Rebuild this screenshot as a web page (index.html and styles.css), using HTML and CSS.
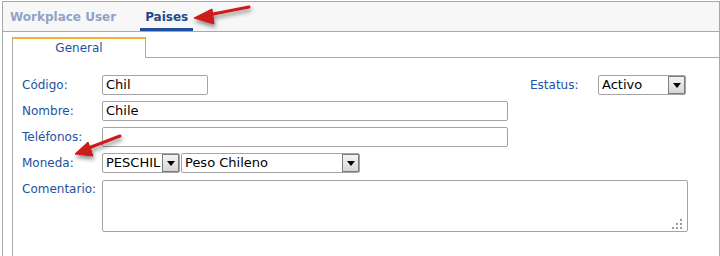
FILE: index.html
```html
<!DOCTYPE html>
<html>
<head>
<meta charset="utf-8">
<link rel="stylesheet" href="styles.css">
</head>
<body>
<div class="window">
  <div class="tabbar">
    <div class="tab">Workplace User</div>
    <div class="tab active">Paises</div>
  </div>
  <div class="content">
    <div class="subtabs">
      <div class="subtab">General</div>
      <div class="subtab-fill"></div>
    </div>
    <div class="panel">
      <div class="form">
        <div class="lbl">Código:</div>
        <div class="ctrl first-row">
          <div class="field w-code">Chil</div>
          <div class="status">
            <div class="lbl status-lbl">Estatus:</div>
            <div class="select w-status"><span class="sel-text">Activo</span><span class="sel-btn"><span class="tri"></span></span></div>
          </div>
        </div>

        <div class="lbl">Nombre:</div>
        <div class="ctrl"><div class="field w-wide">Chile</div></div>

        <div class="lbl">Teléfonos:</div>
        <div class="ctrl"><div class="field w-wide"></div></div>

        <div class="lbl">Moneda:</div>
        <div class="ctrl money">
          <div class="select w-cur"><span class="sel-text">PESCHIL</span><span class="sel-btn"><span class="tri"></span></span></div>
          <div class="select w-curname"><span class="sel-text">Peso Chileno</span><span class="sel-btn"><span class="tri"></span></span></div>
        </div>

        <div class="lbl lbl-top">Comentario:</div>
        <div class="ctrl">
          <div class="textarea">
            <svg class="grip" width="12" height="12" viewBox="0 0 12 12">
              <g fill="#9a9a9a">
                <rect x="8" y="1" width="2" height="2"/>
                <rect x="4" y="5" width="2" height="2"/><rect x="8" y="5" width="2" height="2"/>
                <rect x="0" y="9" width="2" height="2"/><rect x="4" y="9" width="2" height="2"/><rect x="8" y="9" width="2" height="2"/>
              </g>
            </svg>
          </div>
        </div>
      </div>
    </div>
  </div>
</div>

<svg class="annot" width="720" height="256" viewBox="0 0 720 256">
  <defs>
    <filter id="sh" x="-30%" y="-30%" width="160%" height="160%">
      <feDropShadow dx="1" dy="3" stdDeviation="2" flood-color="#000" flood-opacity="0.45"/>
    </filter>
  </defs>
  <g filter="url(#sh)" fill="#cc1a1a" stroke="#cc1a1a">
    <line x1="249" y1="7" x2="208" y2="15" stroke-width="3" stroke-linecap="round"/>
    <polygon points="194,18 212,9 214,24" stroke-width="1" stroke-linejoin="round"/>
    <line x1="120" y1="136" x2="86" y2="149" stroke-width="3" stroke-linecap="round"/>
    <polygon points="75,154 88,142 93,156" stroke-width="1" stroke-linejoin="round"/>
  </g>
</svg>
</body>
</html>
```

FILE: styles.css
```css
html, body {
  margin: 0;
  padding: 0;
  background: #ffffff;
  overflow: hidden;
  width: 720px;
  height: 256px;
  font-family: "DejaVu Sans", Verdana, sans-serif;
}

.window {
  margin: 1px 0 0 2px;
  width: 716px;
  height: 255px;
  overflow: hidden;
  border: 1px solid #a9a9a9;
  border-bottom: none;
}

.tabbar {
  box-sizing: border-box;
  background: #f7f7f7;
  border-bottom: 1px solid #a9a9a9;
  height: 30px;
  display: flex;
  gap: 19px;
  padding-left: 2px;
}

.tab {
  box-sizing: border-box;
  height: 29px;
  padding: 8px 5px 0;
  font-size: 12px;
  font-weight: bold;
  line-height: 14px;
  color: #8fa3c9;
  border-bottom: 3px solid transparent;
}

.tab.active {
  color: #1c4a8e;
  border-bottom-color: #1f4ea1;
}

.content {
  padding: 5px 0 0 9px;
}

.subtabs {
  display: flex;
  height: 21px;
}

.subtab {
  box-sizing: border-box;
  width: 134px;
  height: 21px;
  border: 1px solid #a9a9a9;
  border-top: 2px solid #f2b233;
  border-bottom: none;
  background: #fff;
  color: #1e50a0;
  font-size: 12px;
  line-height: 15px;
  padding-top: 2px;
  text-align: center;
}

.subtab-fill {
  flex: 1;
  border-bottom: 1px solid #a9a9a9;
}

.panel {
  border-left: 1px solid #a9a9a9;
  height: 200px;
  padding: 17px 0 0 9px;
}

.form {
  display: grid;
  grid-template-columns: 80px 586px;
  grid-auto-rows: 20px;
  row-gap: 6px;
}

.form > .lbl-top ~ .ctrl,
.form > .lbl-top {
  margin-top: 1px;
}

.lbl {
  font-size: 12px;
  color: #2252a0;
  line-height: 20px;
  white-space: nowrap;
}

.lbl-top {
  line-height: 16px;
  padding-top: 1px;
}

.ctrl {
  display: flex;
  align-items: flex-start;
}

.first-row {
  justify-content: space-between;
  padding-right: 2px;
}

.status {
  display: flex;
}

.status-lbl {
  width: 68px;
}

.field,
.select {
  box-sizing: border-box;
  height: 20px;
  border: 1px solid #a4a4a4;
  border-radius: 2px;
  background: #fff;
  font-size: 13px;
  line-height: 18px;
  color: #000;
  padding-left: 3px;
  white-space: nowrap;
}

.w-code { width: 106px; }
.w-wide { width: 406px; }
.w-status { width: 88px; }
.w-cur { width: 78px; }
.w-curname { width: 179px; }

.money {
  gap: 1px;
}

.select {
  display: flex;
  padding-right: 0;
  overflow: hidden;
}

.sel-text {
  flex: 1;
  min-width: 0;
  overflow: hidden;
}

.sel-btn {
  box-sizing: border-box;
  width: 17px;
  height: 18px;
  border: 1px solid #7c7c7c;
  background: linear-gradient(#f4f4f4, #d6d6d6);
  display: flex;
  align-items: center;
  justify-content: center;
  flex: none;
}

.tri {
  width: 0;
  height: 0;
  border-left: 4px solid transparent;
  border-right: 4px solid transparent;
  border-top: 5px solid #000;
}

.textarea {
  position: relative;
  box-sizing: border-box;
  width: 586px;
  height: 52px;
  border: 1px solid #a4a4a4;
  border-radius: 2px;
  background: #fff;
}

.grip {
  position: absolute;
  right: 3px;
  bottom: 1px;
}

.annot {
  position: absolute;
  left: 0;
  top: 0;
  pointer-events: none;
}
```
